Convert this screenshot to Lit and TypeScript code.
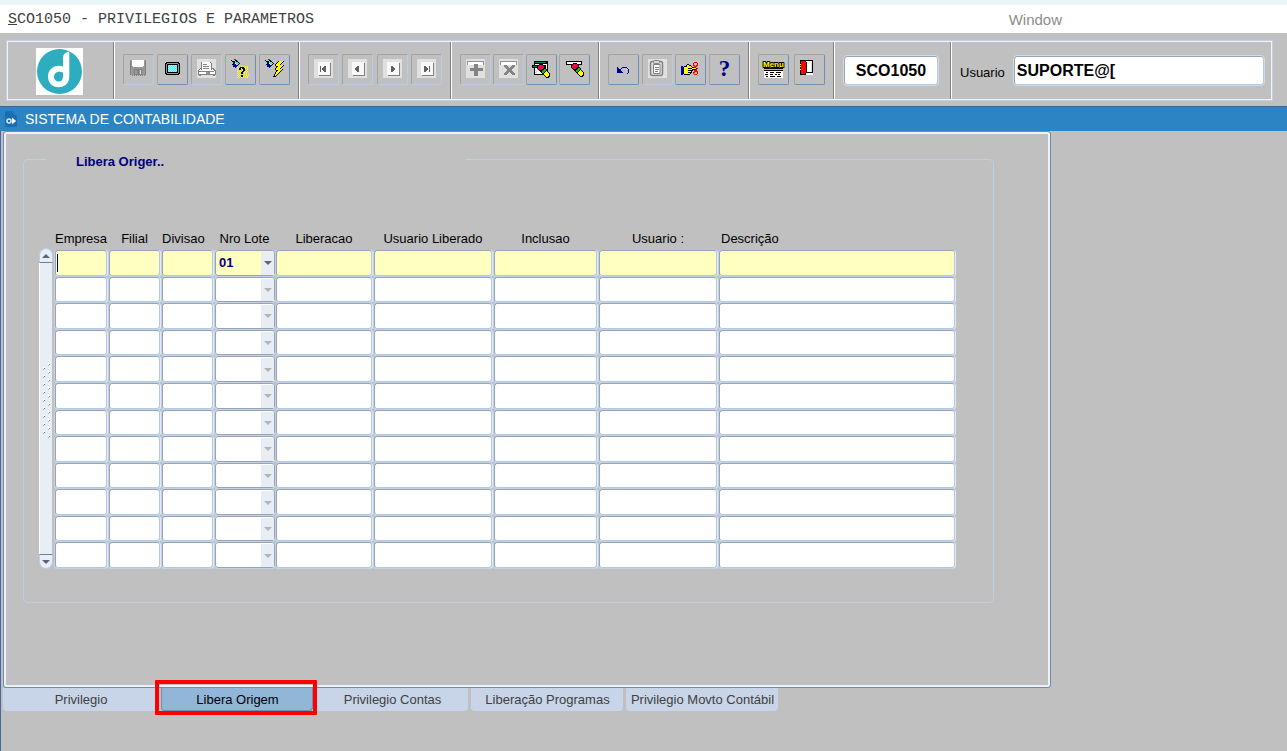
import { LitElement, html, svg, css, TemplateResult, SVGTemplateResult } from "lit";
import { customElement, property, state } from "lit/decorators.js";
import { classMap } from "lit/directives/class-map.js";

const PALETTE: Record<string, string> = {
  k: "#000000",
  w: "#ffffff",
  g: "#808080",
  d: "#989898",
  l: "#e0e0e0",
  y: "#ffff00",
  c: "#40e8f8",
  a: "#b8f4f8",
  b: "#0000b8",
  r: "#ff0000",
  t: "#007878",
  m: "#f00070",
  n: "#00c800",
};

/** Turns rows of palette letters into horizontal runs of pixels. */
function pixels(rows: string[], dx = 0, dy = 0): SVGTemplateResult[] {
  const out: SVGTemplateResult[] = [];
  rows.forEach((row, y) => {
    let x = 0;
    while (x < row.length) {
      const ch = row[x];
      let end = x + 1;
      while (end < row.length && row[end] === ch) end++;
      if (PALETTE[ch]) {
        out.push(svg`<rect x=${x + dx} y=${y + dy} width=${end - x} height="1" fill=${PALETTE[ch]}></rect>`);
      }
      x = end;
    }
  });
  return out;
}

const DROPPER = [
  "...rr......",
  "k...kk.....",
  ".kkkckk....",
  "..kkccck...",
  "..kbwccck..",
  ".kbbbwck...",
  "..bbbbk....",
  "..kbbb.....",
  "....b......",
];

const MARKER = [
  "..kkkk.......",
  ".krmmmk......",
  "krmmmrrk.....",
  "kmmrrmmk.....",
  "kmrrmmkkk....",
  ".kmmmkknnk...",
  "..kkkknnnk...",
  "...kknnnkyk..",
  "....knnkyyyk.",
  ".....kkyyyyyk",
  "......kyyyyyk",
  ".......kyyyyk",
  "........kyykk",
  ".........kkk.",
];

const plate = svg`<rect width="19" height="19" fill="#e0e0e0"></rect>`;
const page = svg`<rect x="5" y="4" width="12" height="13" fill="#808080"></rect>
  <rect x="4" y="3" width="12" height="13" fill="#f8f8f8"></rect>`;

const ICONS: Record<string, SVGTemplateResult> = {
  save: svg`${pixels([
    "ddwwwwwwwwwwwwdd",
    "gdwwwwwwwwwwwwdg",
    "gdwwwwwwwwwwwwdg",
    "gdwwwwwwwwwwwwdg",
    "gdwwwwwwwwwwwwdg",
    "gdwwwwwwwwwwwwdg",
    "gddwwwwwwwwwwddg",
    "gddddddddddddddg",
    "gddddddddddddddg",
    "gdddggggggggdddg",
    "gdddgddggdlgdddg",
    "gdddgddggdlgdddg",
    "gdddgddggdlgdddg",
    "gdddgddggdlgdddg",
    "gdddgggggggggddg",
    "..g.g.g.g.g.g.g.",
  ], 1, 1)}`,
  screen: svg`${pixels([
    ".kkkkkkkkkkkkk.",
    "kkdddddddddddkk",
    "kdkkkkkkkkkkkdk",
    "kdkcacacacackdk",
    "kdkacacacacakdk",
    "kdkcacacacackdk",
    "kdkacacacacakdk",
    "kdkcacacacackdk",
    "kdkacacacacakdk",
    "kdkcacacacackdk",
    "kdkkkkkkkkkkkdk",
    "kkdddddddddddkk",
    ".kkkkkkkkkkkkk.",
  ], 2, 3)}`,
  print: svg`${plate}${pixels([
    "...gwwwwwwwwg.....",
    "...gwwwwwwwwwg....",
    "...gwggggwwwwg....",
    "...gwwwwwwwwwg....",
    "...gwggggggwwg....",
    "...gwwwwwwwwwg....",
    "..ggwggggggwwggg..",
    ".gwgwwwwwwwwwgwgg.",
    "gwwwwwwwwwwwwwwwgg",
    "ggggggggggggggggwg",
    "gwwwwwwwddggwwwwwg",
    "gwwwwwwwddddwwwwwg",
    "gggggggggggggggggg",
    ".gg............gg.",
  ], 1, 3)}`,
  help: svg`${pixels(DROPPER, 0, 0)}${pixels([
    "....y.y.y.y.",
    "y..kkkk.y.y.",
    ".ykkykkky.y.",
    "y.kk.ykky.y.",
    ".y.y.ykk.y..",
    "y.y.ykk.y.y.",
    ".y.ykk.y.y..",
    "y.y.kk.y.y.y",
    ".y.y.y.y.y..",
    "y.y.kk.y.y.y",
    ".y.ykky.y.y.",
    "y.y.y.y.y.y.",
  ], 6, 7)}`,
  run: svg`${pixels(DROPPER, 0, 0)}${pixels([
    "......kyyyyk",
    ".....kyyyyk.",
    "....kyyyyk..",
    "...kyyyyk...",
    "...kyyyyyyyk",
    "....kkyyyyk.",
    "....kyyyyk..",
    "...kyyyyk...",
    "...kyyyyyyk.",
    "....kkyyyk..",
    "....kyyyk...",
    "...kyyyk....",
    "...kyyk.....",
    "..kyyk......",
    "..kyk.......",
    ".kkk........",
  ], 7, 2)}`,
  first: svg`${plate}${page}<path d="M6 7h1v6h-1zM8 9h1v-1h1v-1h2v6h-2v-1h-1v-1h-1z" fill="#606060"></path>`,
  prev: svg`${plate}${page}<path d="M7 9h1v-1h1v-1h2v6h-2v-1h-1v-1h-1z" fill="#606060"></path>`,
  next: svg`${plate}${page}<path d="M12 9h-1v-1h-1v-1h-2v6h2v-1h1v-1h1z" fill="#606060"></path>`,
  last: svg`${plate}${page}<path d="M12 7h1v6h-1zM11 9h-1v-1h-1v-1h-2v6h2v-1h1v-1h1z" fill="#606060"></path>`,
  insert: svg`${plate}<rect x="1" y="2" width="17" height="4" fill="#909090"></rect><rect x="2" y="3" width="15" height="3" fill="#fff"></rect>
    <path d="M8 5h4v4h5v3h-5v5h-4v-5h-4v-3h4z" fill="#848484"></path>`,
  remove: svg`${plate}<rect x="1" y="2" width="17" height="4" fill="#909090"></rect><rect x="2" y="3" width="15" height="3" fill="#fff"></rect>
    <path d="M5 6h3v1h1v1h1v1h1v-1h1v-1h1v-1h3v2h-1v1h-1v1h-1v2h1v1h1v1h1v2h-3v-1h-1v-1h-1v-1h-1v1h-1v1h-1v1h-3v-2h1v-1h1v-1h1v-2h-1v-1h-1v-1h-1z" fill="#848484"></path>`,
  clearBlock: svg`${pixels([
    "..kkkkkkkkkkkkkk",
    "..ktttttttttttkk",
    "..kkkkkkkkkkkkkk",
    "..kwwwwwwwwwwwwk",
    "kkkkkkkkkkkkkkwk",
    "ktttttttttttkkwk",
    "kkkkkkkkkkkkkkwk",
    "..kwwwwwwwwwkwwk",
    "..kwwllwwwwwkwwk",
    "..kwlllwwwwwkwwk",
    "..kwllwwwwwwkkkk",
    "..kllwwwwwwwk...",
    "..kwwwwwwwwwk...",
    "..kkkkkkkkkkk...",
  ], 0, 2)}${pixels(MARKER, 5, 5)}`,
  clearRecord: svg`${pixels([
    "kkkkkkkkkkkkkkkk",
    "kwwwwwwwwwwwwwwk",
    "kwwwwwwwwwwwwwwk",
    "kkkkkkkkkkkkkkkk",
  ], 1, 2)}${pixels(MARKER, 6, 4)}`,
  undo: svg`<path d="M3 8h1v5h5v1h-6zM4 9h1v1h1v1h1v1h1v1h-4zM6 10h1v-1h1v-1h5v1h1v1h1v4h-1v1h-1v-1h1v-4h-1v-1h-5v1h-1v1h-1z" fill="#000090"></path>`,
  paste: svg`${plate}<g fill="none" stroke="#808080" shape-rendering="auto">
    <rect x="2.5" y="2.5" width="12" height="14" rx="2" stroke-width="1.5"></rect>
    <rect x="5.5" y="1.5" width="6" height="3" rx="1" fill="#d8d8d8"></rect>
    <path d="M5.500 5.500h6.500v9h-6.500zM7 8.500h4M7 10.500h4M7 12.500h3" fill="#fff"></path></g>`,
  cut: svg`${pixels([
    ".............rrr..",
    "............r...r.",
    "......kk....r...r.",
    ".....kyykk..rr.rr.",
    "bb.kkkyyyyk..rrr..",
    "bbkyyyyyyyykkrr...",
    "bbkyyyykkkkyyyykr.",
    "bbkyyyyyyyykkkkr..",
    "bbkyyyykkkkk.rrr..",
    "bbkyyyyyyyk..rrrr.",
    "bbkyyyykkkk.rr..r.",
    "bbkyyyyyyk..r...r.",
    "bb.kkkkkk....rrr..",
  ], 0, 3)}`,
  menu: svg`<text x="-1" y="8" font-family="Liberation Sans" font-size="8" font-weight="700"
    fill="#ffff00" stroke="#000" stroke-width="2" stroke-linejoin="round" paint-order="stroke">Menu</text>${pixels([
    "kkkkkkkkkkkkkkkkkkk",
    "ccccccccccccccccccc",
    "kkkkkkkkkkkkkkkkkkk",
    "wwwwwwwwwwwwwwwwwww",
    "wwkkwwkkkkwwkkkkkww",
    "wwwwwwwwwwwwwwwwwww",
    "wkkkwwkkkwwkkwkkwww",
    "wwwwwwwwwwwwwwwwwww",
    "wwkkwwkkkkkwwkkkkww",
    "wwwwwwwwwwwwwwwwwww",
  ], 0, 9)}`,
  exit: svg`${pixels([
    "kkkkkkkkkkkkk",
    "krrrrkwwwwwlk",
    "krrrrrkwwwwlk",
    "krrrrrkwwwwlk",
    "yrrrrrkwwwwlk",
    "krrrrrkwwwwlk",
    "yrrrrrkwwwwlk",
    "krrrrrkwwwwlk",
    "krrrrrkwwwwlk",
    "yrrrrrkwwwwlk",
    "krrrrrkwwwwlk",
    "krrrrrkwwwwlk",
    "krrrrrkkkkkkk",
    "krrrrkwwwwwww",
    "kkkkkkwwwwwww",
  ], 0, 1)}`,
};

interface Tool {
  icon: string;
  label: string;
  off?: boolean;
}

const GROUPS: Tool[][] = [
  [
    { icon: "save", label: "Salvar", off: true },
    { icon: "screen", label: "Tela" },
    { icon: "print", label: "Imprimir", off: true },
    { icon: "help", label: "Entrar consulta" },
    { icon: "run", label: "Executar consulta" },
  ],
  [
    { icon: "first", label: "Primeiro", off: true },
    { icon: "prev", label: "Anterior", off: true },
    { icon: "next", label: "Próximo", off: true },
    { icon: "last", label: "Último", off: true },
  ],
  [
    { icon: "insert", label: "Inserir", off: true },
    { icon: "remove", label: "Remover", off: true },
    { icon: "clearBlock", label: "Limpar bloco" },
    { icon: "clearRecord", label: "Limpar registro" },
  ],
  [
    { icon: "undo", label: "Desfazer" },
    { icon: "paste", label: "Colar", off: true },
    { icon: "cut", label: "Recortar" },
    { icon: "question", label: "Ajuda" },
  ],
  [
    { icon: "menu", label: "Menu" },
    { icon: "exit", label: "Sair" },
  ],
];

@customElement("tool-button")
class ToolButton extends LitElement {
  @property() icon = "";
  @property() label = "";
  @property({ type: Boolean }) off = false;

  static styles = css`
    :host {
      display: block;
    }
    .button {
      display: grid;
      place-content: center;
      box-sizing: border-box;
      width: 31px;
      height: 31px;
      padding: 0 0 2px;
      border: 1px solid;
      border-color: #a4a4a4 #6f90b4 #6f90b4 #a4a4a4;
      border-radius: 2px;
      background: #c0c0c0;
    }
    .off {
      border-color: #a4a4a4 #b8cce8 #b8cce8 #a4a4a4;
    }
    .icon {
      display: block;
      width: 19px;
      height: 19px;
      overflow: visible;
    }
    .mark {
      display: block;
      width: 19px;
      font: bold 23px/19px "Liberation Serif", serif;
      color: #000080;
      text-align: center;
    }
  `;

  render() {
    return html`<button
      class=${classMap({ button: true, off: this.off })}
      aria-label=${this.label}
      ?disabled=${this.off}
    >
      ${this.icon === "question"
        ? html`<span class="mark">?</span>`
        : html`<svg class="icon" viewBox="0 0 19 19" shape-rendering="crispEdges" aria-hidden="true">
            ${ICONS[this.icon]}
          </svg>`}
    </button>`;
  }
}

const COLUMNS = [
  "Empresa",
  "Filial",
  "Divisao",
  "Nro Lote",
  "Liberacao",
  "Usuario Liberado",
  "Inclusao",
  "Usuario :",
  "Descrição",
];
const LOT_COLUMN = 3;
const ROWS = Array.from({ length: 12 }, (_, i) => i);

@customElement("origin-grid")
class OriginGrid extends LitElement {
  static styles = css`
    :host {
      display: flex;
      font: 13px/22px "Liberation Sans", Arial, sans-serif;
    }
    .scroll {
      display: flex;
      flex-direction: column;
      width: 14px;
      margin: 20px 1px 0 0;
      box-sizing: border-box;
    }
    .arrow {
      display: grid;
      place-items: center;
      height: 15px;
      padding: 0;
      border: 1px solid #b8cce8;
      background: #e8eef6;
    }
    .up {
      border-radius: 7px 7px 0 0;
      border-bottom-color: #6f7f98;
    }
    .down {
      border-radius: 0 0 7px 7px;
      border-top-color: #6f7f98;
    }
    .track {
      display: grid;
      place-items: center;
      flex: 1;
      margin: 0 1px 0 0;
      padding-bottom: 16px;
      border-left: 1px solid #fff;
      background: #e8eef6;
    }
    .table {
      flex: 1;
      display: block;
      min-width: 0;
    }
    .head,
    .body,
    .line {
      display: grid;
    }
    .line {
      grid-template-columns: 54px 53px 53px 61px 98px 120px 105px 120px minmax(0, 1fr);
    }
    .body {
      grid-template-rows: repeat(12, minmax(0, 1fr));
      height: 319px;
    }
    .label {
      padding: 0;
      font-weight: 400;
      color: #000;
      white-space: nowrap;
    }
    .label:nth-child(3) {
      text-align: left;
      padding-left: 1px;
    }
    .label:last-child {
      text-align: left;
      padding-left: 3px;
    }
    .cell {
      display: grid;
      padding: 0;
      background: #e2eaf5;
      box-sizing: border-box;
      border: 1px solid #c2d2e8;
      border-width: 0 0 1px 1px;
      border-radius: 3px;
    }
    .inner {
      display: grid;
      min-height: 0;
      margin: 0 1px 0 0;
    }
    .field {
      min-width: 0;
      box-sizing: border-box;
      height: 100%;
      margin: 0;
      padding: 0 2px;
      border: 1px solid;
      border-color: #98a4b4 #b4c8e2 #b4c8e2 #98a4b4;
      border-radius: 3px;
      outline: 0;
      background: #fff;
      font: bold 13px/20px "Liberation Sans", Arial, sans-serif;
      color: #000080;
    }
    .current {
      background: #ffffc0;
    }
    .combo {
      display: grid;
      grid-template-columns: minmax(0, 1fr) 14px;
      min-height: 0;
      align-items: stretch;
    }
    .combo .field {
      grid-area: 1 / 1 / 2 / 3;
      appearance: none;
      padding: 0 3px;
      border-color: #98a4b4;
      opacity: 1;
    }
    .drop {
      grid-area: 1 / 2 / 2 / 3;
      display: grid;
      place-items: center;
      margin: 2px 1px 1px 0;
      background: #e8ecf4;
      pointer-events: none;
    }
    .first {
      grid-area: 1 / 1;
    }
    .focus {
      grid-area: 1 / 1;
      display: grid;
      align-items: center;
      padding-left: 2px;
      pointer-events: none;
    }
    .caret {
      width: 1px;
      height: 18px;
      background: #000080;
    }
  `;

  private cell(row: number, col: number): TemplateResult {
    const current = row === 0;
    const name = `${COLUMNS[col]} ${row + 1}`;
    if (col === LOT_COLUMN) {
      return html`<td class="cell">
        <div class="combo">
          <select class=${classMap({ field: true, current })} aria-label=${name} ?disabled=${!current}>
            <option>${current ? "01" : ""}</option>
          </select>
          <span class="drop">
            <svg width="8" height="4" viewBox="0 0 8 4" aria-hidden="true">
              <path d="M0 0h8L4 4z" fill=${current ? "#5c6478" : "#b4b4b4"}></path>
            </svg>
          </span>
        </div>
      </td>`;
    }
    const focused = current && col === 0;
    return html`<td class="cell">
      <div class="inner">
        <input class=${classMap({ field: true, current, first: focused })} type="text" aria-label=${name} />
        ${focused ? html`<span class="focus"><span class="caret"></span></span>` : ""}
      </div>
    </td>`;
  }

  render() {
    const dots = Array.from({ length: 19 }, (_, i) => ({ x: i % 2 ? 1 : 6, y: i * 4 }));
    return html`
      <div class="scroll">
        <button class="arrow up" aria-label="Rolar para cima">
          <svg width="8" height="4" viewBox="0 0 8 4"><path d="M4 0l4 4H0z" fill="#5c6478"></path></svg>
        </button>
        <div class="track">
          <svg width="9" height="76" viewBox="0 0 9 76" shape-rendering="crispEdges" aria-hidden="true">
            ${dots.map(
              (d) => svg`<rect x=${d.x} y=${d.y} width="2" height="2" fill="#fff"></rect>
                <rect x=${d.x + 1} y=${d.y + 1} width="1" height="1" fill="#6c90b8"></rect>
                <rect x=${d.x} y=${d.y + 2} width="1" height="1" fill="#a8c0dc"></rect>`,
            )}
          </svg>
        </div>
        <button class="arrow down" aria-label="Rolar para baixo">
          <svg width="8" height="4" viewBox="0 0 8 4"><path d="M0 0h8L4 4z" fill="#5c6478"></path></svg>
        </button>
      </div>
      <table class="table">
        <thead class="head">
          <tr class="line">
            ${COLUMNS.map((c) => html`<th class="label" scope="col">${c}</th>`)}
          </tr>
        </thead>
        <tbody class="body">
          ${ROWS.map((r) => html`<tr class="line">${COLUMNS.map((_, c) => this.cell(r, c))}</tr>`)}
        </tbody>
      </table>
    `;
  }
}

const TABS = ["Privilegio", "Libera Origem", "Privilegio Contas", "Liberação Programas", "Privilegio Movto Contábil"];

@customElement("app-root")
class AppRoot extends LitElement {
  @state() private active = 1;

  static styles = css`
    :host {
      display: flex;
      flex-direction: column;
      min-height: 100vh;
      background: #c0c0c0;
      font: 13px/18px "Liberation Sans", Arial, sans-serif;
      color: #000;
    }
    .strip {
      height: 5px;
      background: #e8f6f8;
    }
    .menubar {
      box-sizing: border-box;
      display: flex;
      align-items: center;
      justify-content: space-between;
      height: 28px;
      padding: 2px 225px 0 8px;
      background: #fff;
    }
    .program {
      margin: 0;
      font: 15px/20px "Liberation Mono", monospace;
      color: #404040;
    }
    .window {
      padding: 0;
      border: 0;
      background: none;
      font: 15px/20px "Liberation Sans", Arial, sans-serif;
      color: #8c8c8c;
    }
    .toolbar {
      display: grid;
      grid-template-columns: 107px 185px 152px 148px 150px 85px 117px minmax(0, 1fr);
      height: 57px;
      margin: 7px 14px 5px 6px;
      border: 1px solid #c0d0e8;
      box-shadow: inset 0 0 0 1px #f0f4fa;
      padding: 1px;
    }
    .group {
      display: flex;
      align-items: flex-start;
      justify-content: space-between;
      padding: 12px 9px 0 8px;
      border-right: 1px solid #fff;
      box-shadow: inset -1px 0 0 #808080;
    }
    .brand {
      padding: 6px 0 0 28px;
    }
    .code {
      padding: 14px 0 0 9px;
    }
    .user {
      display: flex;
      align-items: flex-start;
      gap: 9px;
      padding: 14px 7px 0 8px;
    }
    .user label {
      padding-top: 8px;
      line-height: 18px;
    }
    .box {
      box-sizing: border-box;
      height: 29px;
      min-width: 0;
      padding: 0 2px;
      border: 1px solid;
      border-color: #98a4b4 #b4c8e2 #b4c8e2 #98a4b4;
      border-radius: 3px;
      outline: 1px solid #d0dcec;
      background: #fff;
      font: bold 16px/24px "Liberation Sans", Arial, sans-serif;
      color: #000;
    }
    .program-code {
      width: 94px;
      text-align: center;
    }
    .user-name {
      flex: 1;
    }
    .caption {
      display: flex;
      align-items: center;
      gap: 8px;
      height: 24px;
      padding-left: 5px;
      border-top: 1px solid #3c6498;
      background: #2c84c4;
      color: #fff;
    }
    .caption h1 {
      margin: 0;
      font: 14px/24px "Liberation Sans", Arial, sans-serif;
    }
    .desk {
      flex: 1;
      padding-left: 2px;
      border-left: 1px solid #4468a0;
    }
    .panel {
      box-sizing: border-box;
      max-width: 1048px;
      padding: 19px 56px 84px 19px;
      border: 1px solid #6f8cac;
      border-radius: 3px;
      box-shadow: inset 0 0 0 2px #eef2f8;
    }
    .frame {
      margin: 0;
      min-width: 0;
      padding: 60px 37px 33px 15px;
      border: 1px solid #c0cfdf;
      border-radius: 5px;
    }
    .legend {
      box-sizing: border-box;
      width: 420px;
      height: 17px;
      margin-left: 7px;
      padding: 2px 0 0 30px;
      font-weight: 700;
      line-height: 17px;
      color: #000080;
    }
    .tabs {
      display: grid;
      grid-template-columns: 155px repeat(4, 152px);
      gap: 3px;
    }
    .tab {
      position: relative;
      height: 23px;
      padding: 0 0 0 1px;
      border: 0;
      border-radius: 0 0 4px 4px;
      background: #c8d5e8;
      font: 13px/22px "Liberation Sans", Arial, sans-serif;
      color: #404040;
      white-space: nowrap;
    }
    .noted {
      z-index: 1;
    }
    .selected {
      background: #92b6d8;
      box-shadow: inset 1px 0 0 #6f90b4, inset -1px -1px 0 #6f90b4;
      color: #000;
    }
    .marker {
      position: absolute;
      inset: -8px -4px -4px -6px;
      border: 4px solid #ff0000;
      border-radius: 1px;
      pointer-events: none;
    }
  `;

  render() {
    return html`
      <div class="strip"></div>
      <header class="menubar">
        <p class="program"><u>S</u>CO1050 - PRIVILEGIOS E PARAMETROS</p>
        <button class="window">Window</button>
      </header>
      <div class="toolbar">
        <div class="group brand">
          <svg width="47" height="47" viewBox="0 0 47 47" role="img" aria-label="Logo">
            <rect width="47" height="47" fill="#fff"></rect>
            <circle cx="23.5" cy="23.5" r="22.500" fill="#2eacc0"></circle>
            <path
              d="M33.300 3.700C29 4.200 27 6.500 27 10.500V18.500C19 16 12 21 12 28.500C12 35 16.500 39.200 22.500 39.200C29 39.200 33.300 35 33.300 28.500Z"
              fill="#fff"
            ></path>
            <path d="M27 24.500C23 22.500 18 24 18 28.700C18 31.500 20 33.600 22.600 33.600C25.400 33.600 27 31.500 27 28.500Z" fill="#2eacc0"></path>
          </svg>
        </div>
        ${GROUPS.map(
          (g) => html`<div class="group">
            ${g.map((t) => html`<tool-button .icon=${t.icon} .label=${t.label} .off=${!!t.off}></tool-button>`)}
          </div>`,
        )}
        <div class="group code">
          <input class="box program-code" type="text" aria-label="Programa" value="SCO1050" readonly />
        </div>
        <div class="user">
          <label for="usuario">Usuario</label>
          <input id="usuario" class="box user-name" type="text" value="SUPORTE@[" />
        </div>
      </div>
      <div class="caption">
        <svg width="12" height="16" viewBox="0 0 12 16" aria-hidden="true">
          <path d="M0 0h7l5 5v11H0z" fill="#1c6cb0"></path>
          <path d="M8 0l4 4H8z" fill="#2878b8"></path>
          <path d="M7 6.500l4 3.500-4 3.500z" fill="#fff"></path>
          <circle cx="4" cy="10" r="2" fill="none" stroke="#d8ecf8" stroke-width="1.500"></circle>
        </svg>
        <h1>SISTEMA DE CONTABILIDADE</h1>
      </div>
      <main class="desk">
        <section class="panel">
          <fieldset class="frame">
            <legend class="legend">Libera Origer..</legend>
            <origin-grid></origin-grid>
          </fieldset>
        </section>
        <nav class="tabs" role="tablist">
          ${TABS.map(
            (t, i) => html`<button
              class=${classMap({ tab: true, noted: i === 1, selected: i === this.active })}
              role="tab"
              aria-selected=${i === this.active}
              @click=${() => (this.active = i)}
            >
              ${t}${i === 1 ? html`<span class="marker"></span>` : ""}
            </button>`,
          )}
        </nav>
      </main>
    `;
  }
}
